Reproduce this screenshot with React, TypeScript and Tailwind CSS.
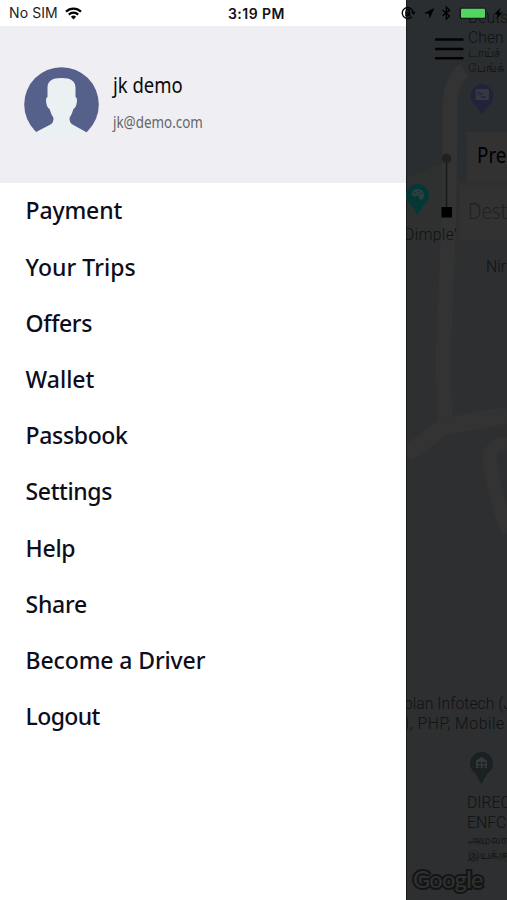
import React from 'react'

type MenuItem = {
  label: string
  className: string
}

type MapLabel = {
  lines: string[]
  className: string
}

const menu: MenuItem[] = [
  { label: 'Payment', className: 'tracking-[-0.15px]' },
  { label: 'Your Trips', className: 'tracking-[0.05px]' },
  { label: 'Offers', className: 'tracking-[-0.35px]' },
  { label: 'Wallet', className: 'tracking-[0px]' },
  { label: 'Passbook', className: 'tracking-[-0.35px]' },
  { label: 'Settings', className: 'tracking-[-0.4px]' },
  { label: 'Help', className: 'tracking-[-0.3px]' },
  { label: 'Share', className: 'tracking-[-0.3px]' },
  { label: 'Become a Driver', className: 'tracking-[-0.12px]' },
  { label: 'Logout', className: 'tracking-[-0.65px]' },
]

// place names pinned on the map
const labels: MapLabel[] = [
  { lines: ['Deuts', 'Chen'], className: 'left-[62px] top-[8px]' },
  { lines: ['டாய்ச்', 'பேங்க்'], className: 'left-[62px] top-[46px] text-[12px] leading-[15px]' },
  { lines: ["Dimple'"], className: 'left-[-2px] top-[225px] tracking-[0.3px]' },
  { lines: ['Nir'], className: 'left-[80px] top-[257px]' },
  { lines: ['plan Infotech (J'], className: 'left-[-2px] top-[694px]' },
  { lines: ['I, PHP, Mobile'], className: 'left-[-1px] top-[714px] tracking-[0.5px]' },
  { lines: ['DIREC', 'ENFC'], className: 'left-[61px] top-[793px]' },
  { lines: ['அமலா', 'இயக்கு'], className: 'left-[62px] top-[833px] text-[12px] leading-[15px]' },
]

function StatusBar() {
  return (
    <div className="absolute inset-x-0 top-0 z-20 flex h-[26px] items-center text-[14px] text-[#111] font-['Inter','Liberation_Sans',sans-serif]">
      <div className="flex w-[228px] items-center gap-[6px] pl-[9px]">
        <span className="w-[50px] whitespace-nowrap leading-[26px] tracking-[0.1px] text-[#222]">No SIM</span>
        <svg width="17" height="13" viewBox="0 0 17 13" fill="none" stroke="#000" strokeWidth="2.2">
          <path d="M1 4.6a10.8 10.8 0 0 1 15 0" />
          <path d="M3.8 7.6a6.8 6.8 0 0 1 9.4 0" />
          <path d="M5.9 9.7a3.9 3.9 0 0 1 5.2 0L8.5 12.5z" fill="#000" stroke="none" />
        </svg>
      </div>
      <span className="w-[173px] whitespace-nowrap font-semibold tracking-[0.45px]">3:19 PM</span>
      <svg width="106" height="26" viewBox="0 0 106 26">
        <g fill="none" stroke="#000" strokeWidth="1.4">
          <path d="M10.8 16.8a5.5 5.5 0 1 1 1.2-5.3" />
          <path d="M5 13v-1.8a1.7 1.7 0 0 1 3.4 0V13" />
        </g>
        <path d="M4.2 12.3h5v4.2h-5zM10.2 11.8h4.4l-2.2 3.2z" />
        <path d="M33.5 8L23 13.3l5 .5.5 5z" />
        <path d="M41.500 10l7 6-3.200 3.200V7l3.200 3.100-7 6" fill="none" stroke="#000" strokeWidth="1.3" />
        <rect x="58.5" y="7.5" width="26.5" height="11.5" rx="1.5" fill="#141f16" />
        <rect x="60" y="8.7" width="24" height="9" rx="1" fill="#52d661" />
        <path d="M86 11.5v3.5q1.5-1.7 0-3.5zM99.5 7.8L93.5 14h3.400l-1.400 5 6-6.500h-3.600z" />
      </svg>
    </div>
  )
}

function Avatar() {
  return (
    <svg width="75" height="76" viewBox="0 0 75 76" className="shrink-0">
      <defs>
        <clipPath id="round">
          <circle cx="37.5" cy="37.5" r="37.3" />
        </clipPath>
      </defs>
      <g clipPath="url(#round)">
        <rect width="75" height="65.5" fill="#55618a" />
        <path
          fill="#ebf1f2"
          d="M23.5 21C23.5 14 28 11 37.5 11S51.5 14 51.5 21V30Q53.6 30.5 52.8 35.5Q52 40.5 49.5 42Q48 47 45.5 51Q45.5 56 48.5 57.5L62 65V76H12V65L26.5 57.5Q29.5 56 29.5 51Q27 47 25.5 42Q23 40.5 22.2 35.5Q21.5 30.5 23.5 30Z"
        />
      </g>
    </svg>
  )
}

function MapDrawing() {
  return (
    <svg width="101" height="900" viewBox="0 0 101 900" className="absolute inset-0">
      <rect width="101" height="900" fill="#2d2f30" />
      <rect width="101" height="180" fill="#2b2e30" />
      <path d="M0 178L37 163V235L0 231z" fill="#2f3030" />
      <g fill="none" stroke="#323332">
        <path d="M58 70Q44 80 44 110L43 210L40 290L37 360L39 422" strokeWidth="15" />
        <path d="M0 453Q14 446 37 427L101 415" strokeWidth="17" />
        <path d="M101 444Q78 443 86 472Q92 510 103 532" strokeWidth="14" />
      </g>
      <path d="M.5 0v900" stroke="#1a1c1c" />

      {/* atm pin */}
      <path d="M76 84a12 12 0 0 1 6 22l-6 9-6-9a12 12 0 0 1 6-22z" fill="#22223b" />
      <rect x="69.5" y="89" width="13.5" height="11" rx="1.5" fill="#373741" />
      <path d="M71.5 92l3 2.5 2-1.5M75 97h5" fill="none" stroke="#24243c" strokeWidth="1.3" />

      {/* art gallery pin */}
      <path d="M11.5 184a11.5 11.5 0 0 1 6 21.3L11.5 215l-6-9.7a11.5 11.5 0 0 1 6-21.3z" fill="#043836" />
      <path d="M11 189c5 0 7.3 3 7 7-.3 3-2.5 4.5-4 3.5s.2-3-1.3-3.8c-2-1-3.4 1.5-5.5.2-2.5-1.8-.5-6.9 3.8-6.9z" fill="#303f3f" />
      <path d="M8.5 193h1.5M11.5 191.5H13M14.5 193.5H16" stroke="#043836" strokeWidth="1.5" />

      {/* government pin */}
      <path d="M75.5 752a11.5 11.5 0 0 1 6 21.3l-6 10.7-6-10.7a11.5 11.5 0 0 1 6-21.3z" fill="#1b2022" />
      <path d="M70 760.5l5.5-3.5 5.5 3.5v7.5H70z" fill="#33383a" />
      <path d="M72 762h3v2h-3zM76.5 762h3v2h-3zM72 765.5h3v2h-3zM76.5 765.5h3v2h-3z" fill="#1b2022" />
    </svg>
  )
}

function RideForm() {
  return (
    <div className="flex flex-1 text-[21px]">
      <svg width="52" height="65" viewBox="0 0 52 65" className="mt-[153px] shrink-0">
        <path d="M40.5 10v45" stroke="#191919" strokeWidth="1.5" />
        <circle cx="40.5" cy="5.5" r="4.8" fill="#202122" />
        <rect x="35.5" y="54" width="10.5" height="10.5" fill="#000" />
      </svg>
      <div className="flex flex-1 flex-col items-end gap-[4px] pt-[132px]">
        <div className="flex h-[49px] w-[40px] items-center bg-[#323232] pb-px pl-[10px] text-black">
          <span className="origin-left scale-x-[0.9]">Pre</span>
        </div>
        <div className="flex h-[55px] w-[47px] items-center bg-[#323232] pb-px pl-[8px] font-light text-[#202020]">
          <span className="origin-left scale-x-[0.9]">Dest</span>
        </div>
      </div>
    </div>
  )
}

function MapPanel() {
  return (
    <section className="relative flex flex-1 flex-col overflow-hidden whitespace-nowrap bg-[#2d2f30]">
      <MapDrawing />
      <div className="relative flex flex-1 flex-col">
        <RideForm />
        <div className="mb-[8px] pl-[7px] text-[23.5px] leading-[26px] tracking-[-0.7px] text-[#2f3132] font-['Lato',sans-serif] font-medium [-webkit-text-stroke:4px_#141515] [paint-order:stroke_fill]">
          Google
        </div>
      </div>
      <div className="absolute inset-0 text-[15.8px] leading-[20px] font-light text-[#111212] font-['Roboto',sans-serif]">
        <svg width="29" height="24" viewBox="0 0 29 24" stroke="#030303" strokeWidth="2.6" className="absolute left-[29px] top-[37px]">
          <path d="M0 2.5h28.5M0 12h28.5M0 21.3h28.5" />
        </svg>
        {labels.map(label => (
          <div key={label.lines[0]} className={`absolute ${label.className}`}>
            {label.lines.map(line => (
              <div key={line}>{line}</div>
            ))}
          </div>
        ))}
      </div>
    </section>
  )
}

export default function App() {
  return (
    <main className="relative flex h-[900px] w-[507px] overflow-hidden bg-white font-['Noto_Sans',sans-serif]">
      <StatusBar />
      <aside className="w-[406px] pt-[26px]">
        <header className="flex h-[157px] items-start gap-[14px] bg-[#efeef3] pl-[24px] pt-[41px]">
          <Avatar />
          <div className="flex flex-col gap-[12px] whitespace-nowrap pt-[4px]">
            <div className="origin-left scale-x-[0.86] text-[21.5px] leading-[28px] text-[#0a0a0a]">jk demo</div>
            <div className="origin-left scale-x-[0.865] text-[15.5px] leading-[22px] text-[#666]">jk@demo.com</div>
          </div>
        </header>
        <nav className="-mt-[0.4px] flex flex-col">
          {menu.map(item => (
            <a
              key={item.label}
              className={`flex h-[56.2px] items-center whitespace-nowrap pl-[25.6px] text-[23px] font-medium text-[#0d0d1c] ${item.className}`}
            >
              {item.label}
            </a>
          ))}
        </nav>
      </aside>
      <MapPanel />
    </main>
  )
}
